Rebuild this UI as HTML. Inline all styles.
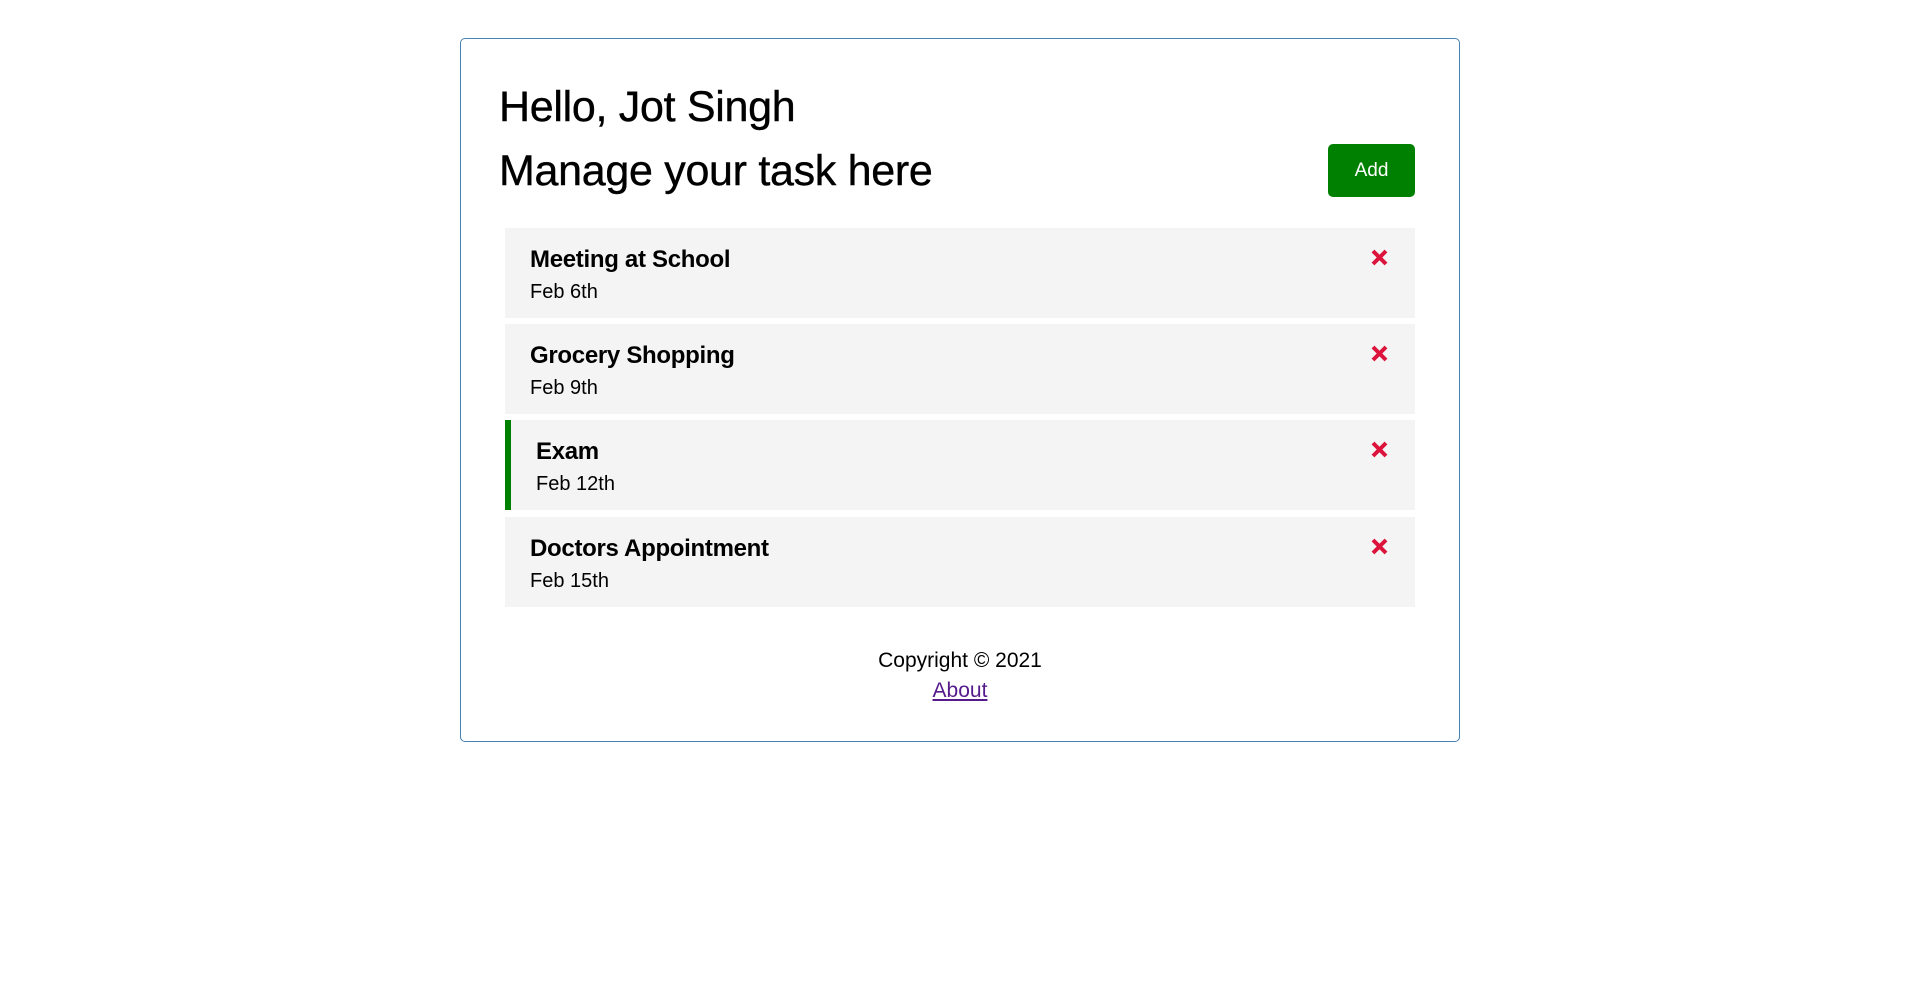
<!DOCTYPE html>
<html><head><style>
body{margin:0;background:#fff;font-family:"Liberation Sans",sans-serif;color:#000}
.card{position:absolute;left:460px;top:38px;width:998px;height:702px;border:1px solid #4682b4;border-radius:5px}
h1{position:absolute;margin:0;font-weight:normal;font-size:43px;left:38px;letter-spacing:-0.3px;-webkit-text-stroke:0.4px #000}
.btn{position:absolute;left:867px;top:105px;width:87px;height:53px;background:#008000;color:#fff;border-radius:5px;font-size:19px;display:flex;align-items:center;justify-content:center}
.task{position:absolute;left:44px;width:910px;height:90px;background:#f4f4f4}
.task .t{position:absolute;left:25px;top:18px;font-size:24px;font-weight:bold;letter-spacing:-0.3px}
.task .d{position:absolute;left:25px;top:53px;font-size:20px}
.task svg{position:absolute;left:866px;top:21px}
.rem{border-left:6px solid #008000;width:904px}
.foot{position:absolute;left:0;width:100%;text-align:center;font-size:21px}
a{color:#551a8b}
</style></head><body>
<div class="card">
<h1 style="top:44px">Hello, Jot Singh</h1>
<h1 style="top:108px">Manage your task here</h1>
<div class="btn">Add</div>
<div class="task" style="top:189px"><div class="t">Meeting at School</div><div class="d">Feb 6th</div><svg width="17" height="17" viewBox="0 0 17 17"><path d="M2 2L15 15M15 2L2 15" stroke="#dc143c" stroke-width="4"/></svg></div>
<div class="task" style="top:285px"><div class="t">Grocery Shopping</div><div class="d">Feb 9th</div><svg width="17" height="17" viewBox="0 0 17 17"><path d="M2 2L15 15M15 2L2 15" stroke="#dc143c" stroke-width="4"/></svg></div>
<div class="task rem" style="top:381px"><div class="t">Exam</div><div class="d">Feb 12th</div><svg width="17" height="17" viewBox="0 0 17 17" style="left:860px"><path d="M2 2L15 15M15 2L2 15" stroke="#dc143c" stroke-width="4"/></svg></div>
<div class="task" style="top:478px"><div class="t">Doctors Appointment</div><div class="d">Feb 15th</div><svg width="17" height="17" viewBox="0 0 17 17"><path d="M2 2L15 15M15 2L2 15" stroke="#dc143c" stroke-width="4"/></svg></div>
<div class="foot" style="top:610px">Copyright © 2021</div>
<div class="foot" style="top:640px"><a href="#">About</a></div>
</div>
</body></html>
